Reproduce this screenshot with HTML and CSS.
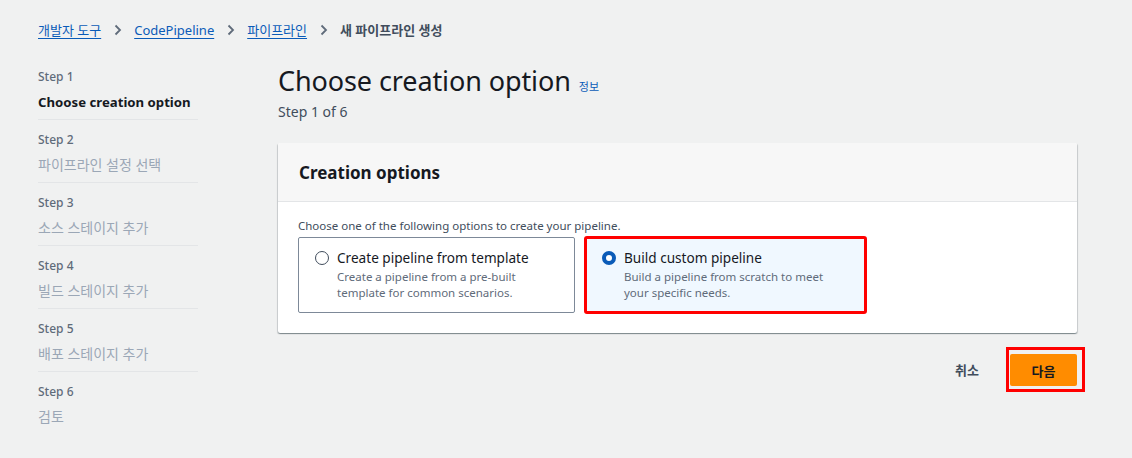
FILE: index.html
```html
<!DOCTYPE html>
<html lang="ko">
<head>
<meta charset="utf-8">
<title>새 파이프라인 생성</title>
<link rel="stylesheet" href="styles.css">
</head>
<body>
<div class="page">
  <nav class="breadcrumbs">
    <a class="crumb" href="#">개발자 도구</a>
    <span class="chev"><svg width="8" height="12" viewBox="0 0 8 12"><path d="M1.5 1.5 6 6l-4.5 4.5" fill="none" stroke="#5f6b7a" stroke-width="1.8"/></svg></span>
    <a class="crumb" href="#">CodePipeline</a>
    <span class="chev"><svg width="8" height="12" viewBox="0 0 8 12"><path d="M1.5 1.5 6 6l-4.5 4.5" fill="none" stroke="#5f6b7a" stroke-width="1.8"/></svg></span>
    <a class="crumb" href="#">파이프라인</a>
    <span class="chev"><svg width="8" height="12" viewBox="0 0 8 12"><path d="M1.5 1.5 6 6l-4.5 4.5" fill="none" stroke="#5f6b7a" stroke-width="1.8"/></svg></span>
    <span class="crumb-current">새 파이프라인 생성</span>
  </nav>

  <div class="layout">
    <ul class="steps">
      <li class="step active"><div class="step-num">Step 1</div><div class="step-title">Choose creation option</div></li>
      <li class="step"><div class="step-num">Step 2</div><div class="step-title">파이프라인 설정 선택</div></li>
      <li class="step"><div class="step-num">Step 3</div><div class="step-title">소스 스테이지 추가</div></li>
      <li class="step"><div class="step-num">Step 4</div><div class="step-title">빌드 스테이지 추가</div></li>
      <li class="step"><div class="step-num">Step 5</div><div class="step-title">배포 스테이지 추가</div></li>
      <li class="step last"><div class="step-num">Step 6</div><div class="step-title">검토</div></li>
    </ul>

    <main class="main">
      <div class="title-row">
        <h1 class="page-title">Choose creation option</h1>
        <a class="info" href="#">정보</a>
      </div>
      <div class="subtitle">Step 1 of 6</div>

      <section class="card">
        <div class="card-header"><h2>Creation options</h2></div>
        <div class="card-body">
          <p class="desc">Choose one of the following options to create your pipeline.</p>
          <div class="tiles">
            <div class="tile">
              <span class="radio"></span>
              <div class="tile-text">
                <div class="tile-title">Create pipeline from template</div>
                <div class="tile-desc">Create a pipeline from a pre-built template for common scenarios.</div>
              </div>
            </div>
            <div class="tile selected highlight">
              <span class="radio checked"></span>
              <div class="tile-text">
                <div class="tile-title">Build custom pipeline</div>
                <div class="tile-desc">Build a pipeline from scratch to meet your specific needs.</div>
              </div>
            </div>
          </div>
        </div>
      </section>

      <div class="actions">
        <button class="btn-link">취소</button>
        <span class="highlight-btn"><button class="btn-primary">다음</button></span>
      </div>
    </main>
  </div>
</div>
</body>
</html>
```

FILE: styles.css
```css
* { box-sizing: border-box; }
html, body { margin: 0; padding: 0; }
body {
  background: #f0f1f1;
  font-family: "Noto Sans", "Noto Sans CJK KR", sans-serif;
  color: #16191f;
  width: 1132px;
  height: 458px;
  overflow: hidden;
}
.page { padding: 20px 0 0 38px; }

.breadcrumbs {
  display: flex;
  align-items: center;
  height: 20px;
  font-size: 13px;
  line-height: 20px;
}
.crumb {
  color: #0a5bb8;
  text-decoration: underline;
  text-underline-offset: 3px;
  text-decoration-thickness: 1px;
}
.chev { display: flex; align-items: center; margin: 0 12px 0 13px; }
.crumb-current { color: #414d5c; font-weight: 600; }

.layout {
  display: flex;
  align-items: flex-start;
  gap: 80px;
  margin-top: 18px;
}

.steps {
  list-style: none;
  margin: -1px 0 0;
  padding: 0;
  width: 160px;
  flex: none;
}
.step {
  padding: 10px 0 6px;
  border-bottom: 1px solid #e3e5e7;
}
.step.last { border-bottom: none; }
.step-num {
  font-size: 12px;
  line-height: 20px;
  color: #5f6b7a;
  font-weight: 500;
}
.step-title {
  margin-top: 4px;
  font-size: 14px;
  line-height: 22px;
  color: #9ba7b6;
  white-space: nowrap;
}
.step.active .step-title { color: #16191f; font-weight: 700; font-size: 13.2px; }

.main { width: 799px; flex: none; }
.title-row {
  display: flex;
  align-items: baseline;
  gap: 8px;
  margin-top: 6px;
}
.page-title {
  margin: 0;
  font-size: 27px;
  line-height: 34px;
  font-weight: 400;
  color: #16191f;
  letter-spacing: -0.1px;
}
.info { font-size: 11px; color: #0a5bb8; text-decoration: none; }
.subtitle {
  font-size: 14px;
  line-height: 22px;
  color: #414d5c;
  margin-top: 3px;
}

.card {
  margin-top: 20px;
  background: #fff;
  border-radius: 2px;
  box-shadow: 0 1px 1px 0 rgba(0,28,36,.3), 1px 1px 1px 0 rgba(0,28,36,.15), -1px 1px 1px 0 rgba(0,28,36,.15);
  overflow: hidden;
}
.card-header {
  background: #f7f7f7;
  border-bottom: 1px solid #e3e5e7;
  height: 59px;
  display: flex;
  align-items: center;
  padding: 2px 21px 0;
}
.card-header h2 { margin: 0; font-size: 17px; font-weight: 700; line-height: 24px; }
.card-body { padding: 14px 20px 20px; }
.desc {
  margin: 0;
  font-size: 11.5px;
  line-height: 20px;
  color: #414d5c;
}
.tiles { display: flex; gap: 10px; margin-top: 1px; }
.tile {
  width: 277px;
  height: 76px;
  border: 1px solid #7d8998;
  border-radius: 2px;
  display: flex;
  gap: 8px;
  padding: 10px 16px;
}
.tile.selected {
  width: 281px;
  border-color: #0972d3;
  background: #f0f8ff;
}
.highlight { outline: 3px solid #ff0000; outline-offset: -2px; }
.radio {
  flex: none;
  width: 14px;
  height: 14px;
  border-radius: 50%;
  border: 1.5px solid #414d5c;
  margin-top: 3px;
  background: #fff;
}
.radio.checked { border: 4px solid #0a5bb8; }
.tile-title { font-size: 13.6px; line-height: 20px; color: #16191f; }
.tile-desc { font-size: 11.5px; line-height: 16px; color: #5f6b7a; margin-top: 1px; }

.actions {
  display: flex;
  justify-content: flex-end;
  align-items: center;
  gap: 27px;
  margin-top: 14px;
}
.btn-link {
  border: none;
  background: none;
  font-family: inherit;
  font-weight: 700;
  font-size: 13px;
  color: #414d5c;
  padding: 0;
}
.highlight-btn {
  display: inline-flex;
  padding: 4px 5px 3px 1px;
  border: 3px solid #ff0000;
  margin-right: -8px;
}
.btn-primary {
  width: 67px;
  height: 32px;
  border: none;
  border-radius: 2px;
  background: #ff8c00;
  font-family: inherit;
  font-weight: 700;
  font-size: 13px;
  color: #16191f;
}
```
